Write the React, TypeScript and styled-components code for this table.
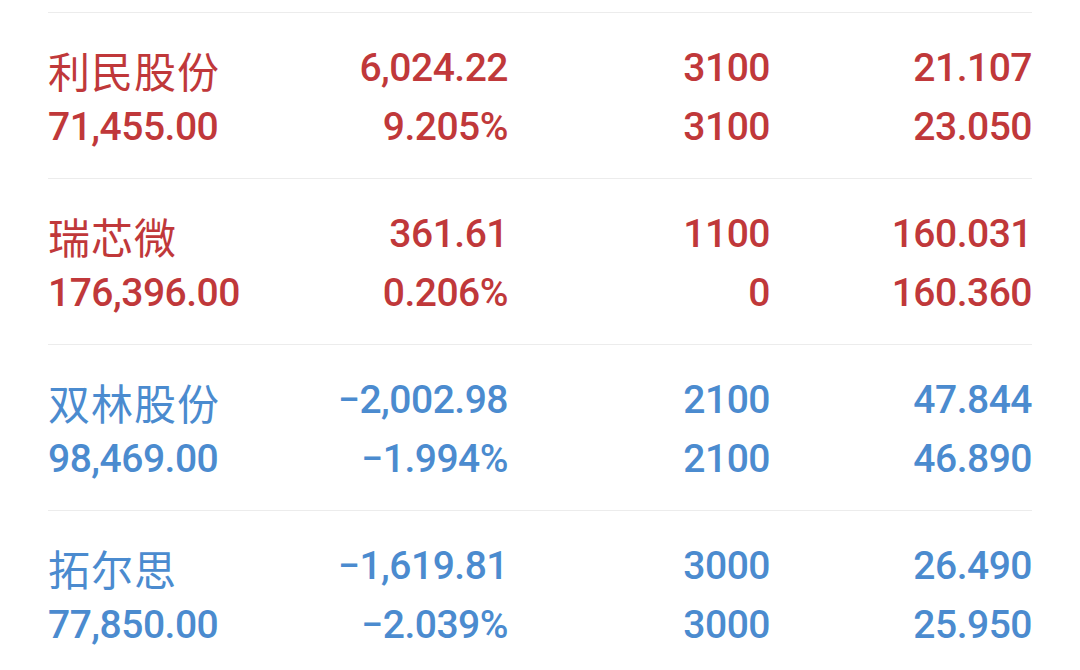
import React from "react";
import styled, { createGlobalStyle } from "styled-components";

const Global = createGlobalStyle`
  html, body { margin: 0; padding: 0; background: #ffffff; }
  body { width: 1080px; height: 670px; overflow: hidden; }
`;

const List = styled.div`
  padding: 12px 48px 0 48px;
  width: 984px;
`;

const Row = styled.div<{ $tone: "up" | "down" }>`
  display: grid;
  grid-template-columns: 240px 220px 262px 262px;
  grid-auto-rows: 59px;
  border-top: 1px solid #ececec;
  padding: 26px 0 21px 0;
  color: ${(p) => (p.$tone === "up" ? "#c0383a" : "#4b8bcf")};
`;

const Cell = styled.div<{ $align?: "left" | "right" }>`
  font-family: Roboto, "Noto Sans", sans-serif;
  font-size: 39px;
  font-weight: 500;
  letter-spacing: -0.5px;
  line-height: 59px;
  white-space: nowrap;
  text-align: ${(p) => p.$align ?? "right"};
`;

const Name = styled.div`
  font-family: "Noto Sans CJK SC", "Noto Sans", sans-serif;
  font-size: 42px;
  letter-spacing: 1px;
  line-height: 59px;
  white-space: nowrap;
  position: relative;
  top: 1px;
`;

type Stock = {
  name: string;
  value: string;
  pnl: string;
  pct: string;
  qty: string;
  avail: string;
  price: string;
  cost: string;
  tone: "up" | "down";
};

const stocks: Stock[] = [
  { name: "利民股份", value: "71,455.00", pnl: "6,024.22", pct: "9.205%", qty: "3100", avail: "3100", price: "21.107", cost: "23.050", tone: "up" },
  { name: "瑞芯微", value: "176,396.00", pnl: "361.61", pct: "0.206%", qty: "1100", avail: "0", price: "160.031", cost: "160.360", tone: "up" },
  { name: "双林股份", value: "98,469.00", pnl: "−2,002.98", pct: "−1.994%", qty: "2100", avail: "2100", price: "47.844", cost: "46.890", tone: "down" },
  { name: "拓尔思", value: "77,850.00", pnl: "−1,619.81", pct: "−2.039%", qty: "3000", avail: "3000", price: "26.490", cost: "25.950", tone: "down" },
];

export default function App() {
  return (
    <>
      <Global />
      <List>
        {stocks.map((s) => (
          <Row key={s.name} $tone={s.tone}>
            <Name>{s.name}</Name>
            <Cell>{s.pnl}</Cell>
            <Cell>{s.qty}</Cell>
            <Cell>{s.price}</Cell>
            <Cell $align="left">{s.value}</Cell>
            <Cell>{s.pct}</Cell>
            <Cell>{s.avail}</Cell>
            <Cell>{s.cost}</Cell>
          </Row>
        ))}
      </List>
    </>
  );
}
